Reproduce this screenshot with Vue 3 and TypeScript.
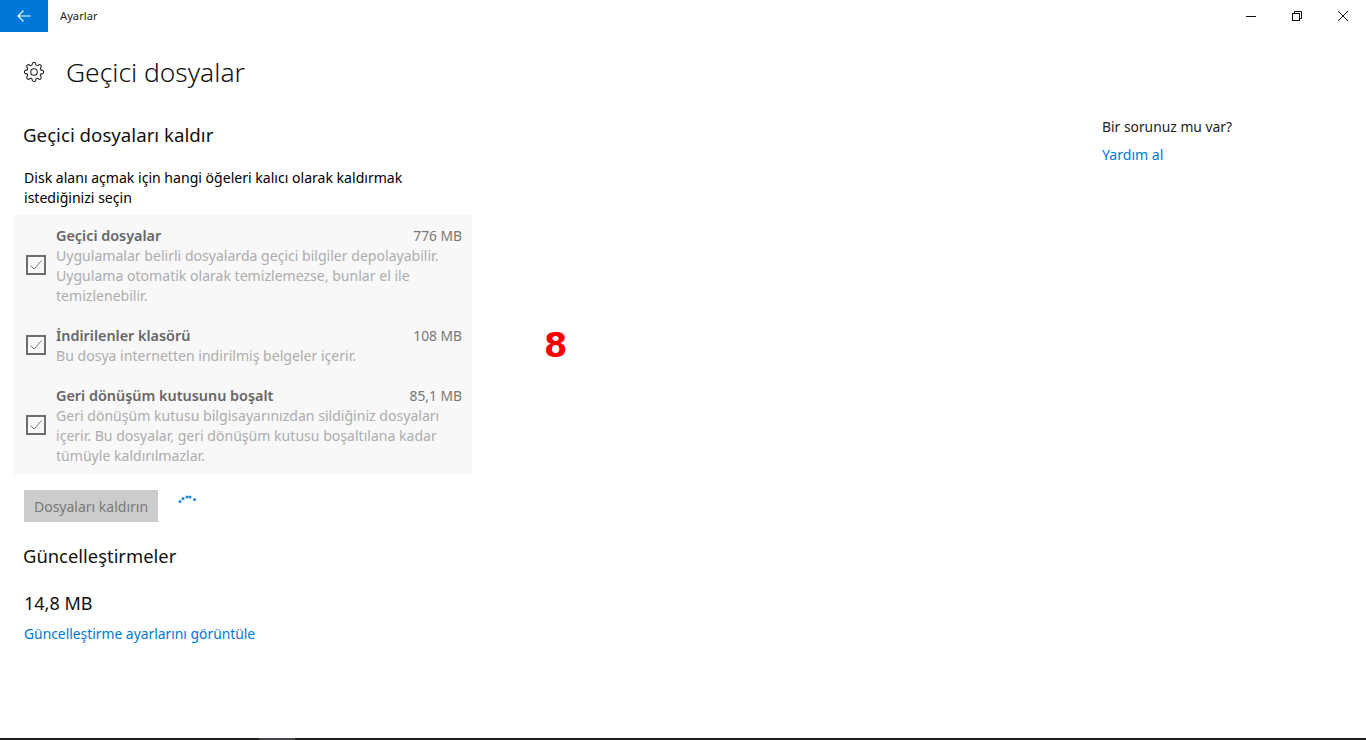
<script setup lang="ts">
interface CleanupItem {
  title: string;
  size: string;
  lines: string[];
}

const items: CleanupItem[] = [
  {
    title: 'Geçici dosyalar',
    size: '776 MB',
    lines: [
      'Uygulamalar belirli dosyalarda geçici bilgiler depolayabilir.',
      'Uygulama otomatik olarak temizlemezse, bunlar el ile',
      'temizlenebilir.',
    ],
  },
  {
    title: 'İndirilenler klasörü',
    size: '108 MB',
    lines: ['Bu dosya internetten indirilmiş belgeler içerir.'],
  },
  {
    title: 'Geri dönüşüm kutusunu boşalt',
    size: '85,1 MB',
    lines: [
      'Geri dönüşüm kutusu bilgisayarınızdan sildiğiniz dosyaları',
      'içerir. Bu dosyalar, geri dönüşüm kutusu boşaltılana kadar',
      'tümüyle kaldırılmazlar.',
    ],
  },
];

// eight rounded cog teeth around the centre of a 24 box
const gearPath = (() => {
  const point = (r: number, deg: number) => {
    const a = (deg * Math.PI) / 180;
    return `${(12 + r * Math.cos(a)).toFixed(2)} ${(12 + r * Math.sin(a)).toFixed(2)}`;
  };
  let d = `M${point(8.1, -14)}`;
  for (let i = 0; i < 8; i++) {
    const c = i * 45;
    d += `C${point(11.6, c - 12)} ${point(11.6, c + 12)} ${point(8.1, c + 14)}`;
    d += `Q${point(7.2, c + 22.5)} ${point(8.1, c + 31)}`;
  }
  return d + 'Z';
})();
</script>

<template>
  <div class="window">
    <header class="titlebar">
      <button class="back" aria-label="Geri">
        <svg width="16" height="16" viewBox="0 0 16 16" fill="none" stroke="#fff" stroke-width="1.1">
          <path d="M2 8h12.5M7.5 2.5 2 8l5.5 5.5" />
        </svg>
      </button>
      <span class="app-name">Ayarlar</span>
      <div class="controls">
        <span class="control">
          <svg width="12" height="12" viewBox="0 0 12 12" fill="none" stroke="#111" stroke-width="1">
            <path d="M1 6.5h10" />
          </svg>
        </span>
        <span class="control">
          <svg width="12" height="12" viewBox="0 0 12 12" fill="none" stroke="#111" stroke-width="1">
            <rect x="1.5" y="3.5" width="7" height="7" />
            <path d="M3.5 3.5v-2h7v7h-2" />
          </svg>
        </span>
        <span class="control">
          <svg width="12" height="12" viewBox="0 0 12 12" fill="none" stroke="#111" stroke-width="1">
            <path d="M1 1l10 10M11 1 1 11" />
          </svg>
        </span>
      </div>
    </header>

    <div class="page-title">
      <svg class="gear" width="22" height="22" viewBox="0 0 24 24" fill="none" stroke="#222" stroke-width="1.2" stroke-linejoin="round">
        <path :d="gearPath" />
        <circle cx="12" cy="12" r="3.6" />
      </svg>
      <h1>Geçici dosyalar</h1>
    </div>

    <main class="content">
      <section class="left">
        <h2 class="first-heading">Geçici dosyaları kaldır</h2>
        <p class="intro">
          Disk alanı açmak için hangi öğeleri kalıcı olarak kaldırmak<br />
          istediğinizi seçin
        </p>

        <div class="list">
          <div v-for="item in items" :key="item.title" class="item">
            <span class="checkbox">
              <svg width="14" height="14" viewBox="0 0 14 14" fill="none" stroke="#777" stroke-width="1">
                <path d="M1.5 7.5 5 11l7.5-8.5" />
              </svg>
            </span>
            <div class="item-body">
              <div class="item-head">
                <strong>{{ item.title }}</strong>
                <span class="size">{{ item.size }}</span>
              </div>
              <div v-for="line in item.lines" :key="line" class="desc">{{ line }}</div>
            </div>
          </div>
        </div>

        <div class="actions">
          <button class="remove" disabled>Dosyaları kaldırın</button>
          <svg class="spinner" width="22" height="14" viewBox="0 0 22 14" fill="#1a86e0">
            <circle cx="4" cy="11.5" r="1.5" />
            <circle cx="7" cy="8.5" r="1.5" />
            <circle cx="11" cy="7" r="1.5" />
            <circle cx="14" cy="7" r="1.5" />
            <circle cx="18.5" cy="9.5" r="1.5" />
          </svg>
        </div>

        <h2 class="updates-heading">Güncelleştirmeler</h2>
        <div class="updates-size">14,8 MB</div>
        <a class="link">Güncelleştirme ayarlarını görüntüle</a>
      </section>

      <aside class="help">
        <div class="help-title">Bir sorunuz mu var?</div>
        <a class="link">Yardım al</a>
      </aside>
    </main>

    <div class="marker">8</div>

    <footer class="taskbar">
      <span class="taskbar-active"></span>
    </footer>
  </div>
</template>

<style>
html,
body {
  margin: 0;
  background: #fff;
}
</style>

<style scoped>
.window {
  position: relative;
  display: flex;
  flex-direction: column;
  height: 740px;
  overflow: hidden;
  background: #fff;
  color: #111;
  font-family: "Noto Sans", "Open Sans", sans-serif;
  font-size: 14px;
}

.titlebar {
  display: flex;
  align-items: center;
  height: 32px;
  flex-shrink: 0;
}

.back {
  display: flex;
  align-items: center;
  justify-content: center;
  width: 48px;
  height: 32px;
  padding: 0;
  border: 0;
  background: #0078d7;
}

.app-name {
  margin: 0 0 2px 12px;
  font-size: 11.2px;
  color: #222;
}

.controls {
  display: flex;
  margin-left: auto;
}

.control {
  display: flex;
  align-items: center;
  justify-content: center;
  width: 46px;
  height: 32px;
}

.page-title {
  display: flex;
  align-items: center;
  height: 40px;
  padding-left: 23px;
  margin-top: 20px;
}

.gear {
  flex-shrink: 0;
}

h1 {
  margin: 0 0 0 21px;
  font-size: 26.4px;
  font-weight: 300;
  line-height: 40px;
  color: #111;
}

.content {
  display: flex;
  flex: 1;
  min-height: 0;
}

.left {
  display: flex;
  flex-direction: column;
  align-items: flex-start;
  width: 458px;
  margin-left: 14px;
}

h2 {
  margin: 0;
  font-size: 18.4px;
  font-weight: 400;
  line-height: 28px;
  color: #111;
}

.first-heading {
  margin: 29px 0 0 9px;
  font-size: 18.7px;
}

.intro {
  margin: 19px 0 0 10px;
  font-size: 14.07px;
  line-height: 20px;
  color: #000;
}

.list {
  width: 458px;
  margin-top: 7px;
  padding: 11px 10px 9px 0;
  box-sizing: border-box;
  background: #f8f8f8;
}

.item {
  display: flex;
  align-items: center;
}

.item + .item {
  margin-top: 20px;
}

.checkbox {
  display: flex;
  align-items: center;
  justify-content: center;
  box-sizing: border-box;
  width: 20px;
  height: 20px;
  margin: -2px 0 0 12px;
  border: 2px solid #6e6e6e;
  flex-shrink: 0;
}

.item-body {
  flex: 1;
  margin-left: 10px;
  min-width: 0;
}

.item-head {
  display: flex;
  justify-content: space-between;
  line-height: 20px;
  color: #666;
}

.item-head strong {
  font-size: 14.4px;
  font-weight: 600;
}

.size {
  font-size: 13.8px;
  color: #777;
}

.desc {
  font-size: 14.07px;
  line-height: 20px;
  color: #adadad;
  white-space: nowrap;
}

.actions {
  display: flex;
  align-items: flex-start;
  margin: 15px 0 0 10px;
}

.remove {
  width: 134px;
  height: 32px;
  padding: 0;
  border: 0;
  background: #cccccc;
  color: #7a7a7a;
  font: inherit;
}

.spinner {
  margin: 0 0 0 18px;
}

.updates-heading {
  margin: 20px 0 0 9px;
}

.updates-size {
  margin: 20px 0 0 10px;
  font-size: 18px;
  line-height: 26px;
  color: #111;
}

.link {
  color: #0078d7;
  font-size: 13.85px;
  line-height: 20px;
}

.left > .link {
  margin: 8px 0 0 10px;
}

.help {
  display: flex;
  flex-direction: column;
  margin-left: 630px;
  padding-top: 25px;
}

.help-title {
  font-size: 13.85px;
  line-height: 20px;
  margin-bottom: 8px;
  color: #222;
}

.help .link {
  font-size: 14.1px;
}

.marker {
  position: absolute;
  left: 544px;
  top: 323px;
  font-family: "DejaVu Sans", sans-serif;
  font-size: 33.5px;
  font-weight: 700;
  line-height: 46px;
  color: #f00;
}

.taskbar {
  display: flex;
  height: 2px;
  flex-shrink: 0;
  background: #1d1d1d;
}

.taskbar-active {
  width: 36px;
  margin-left: 259px;
  background: #45454a;
}
</style>
